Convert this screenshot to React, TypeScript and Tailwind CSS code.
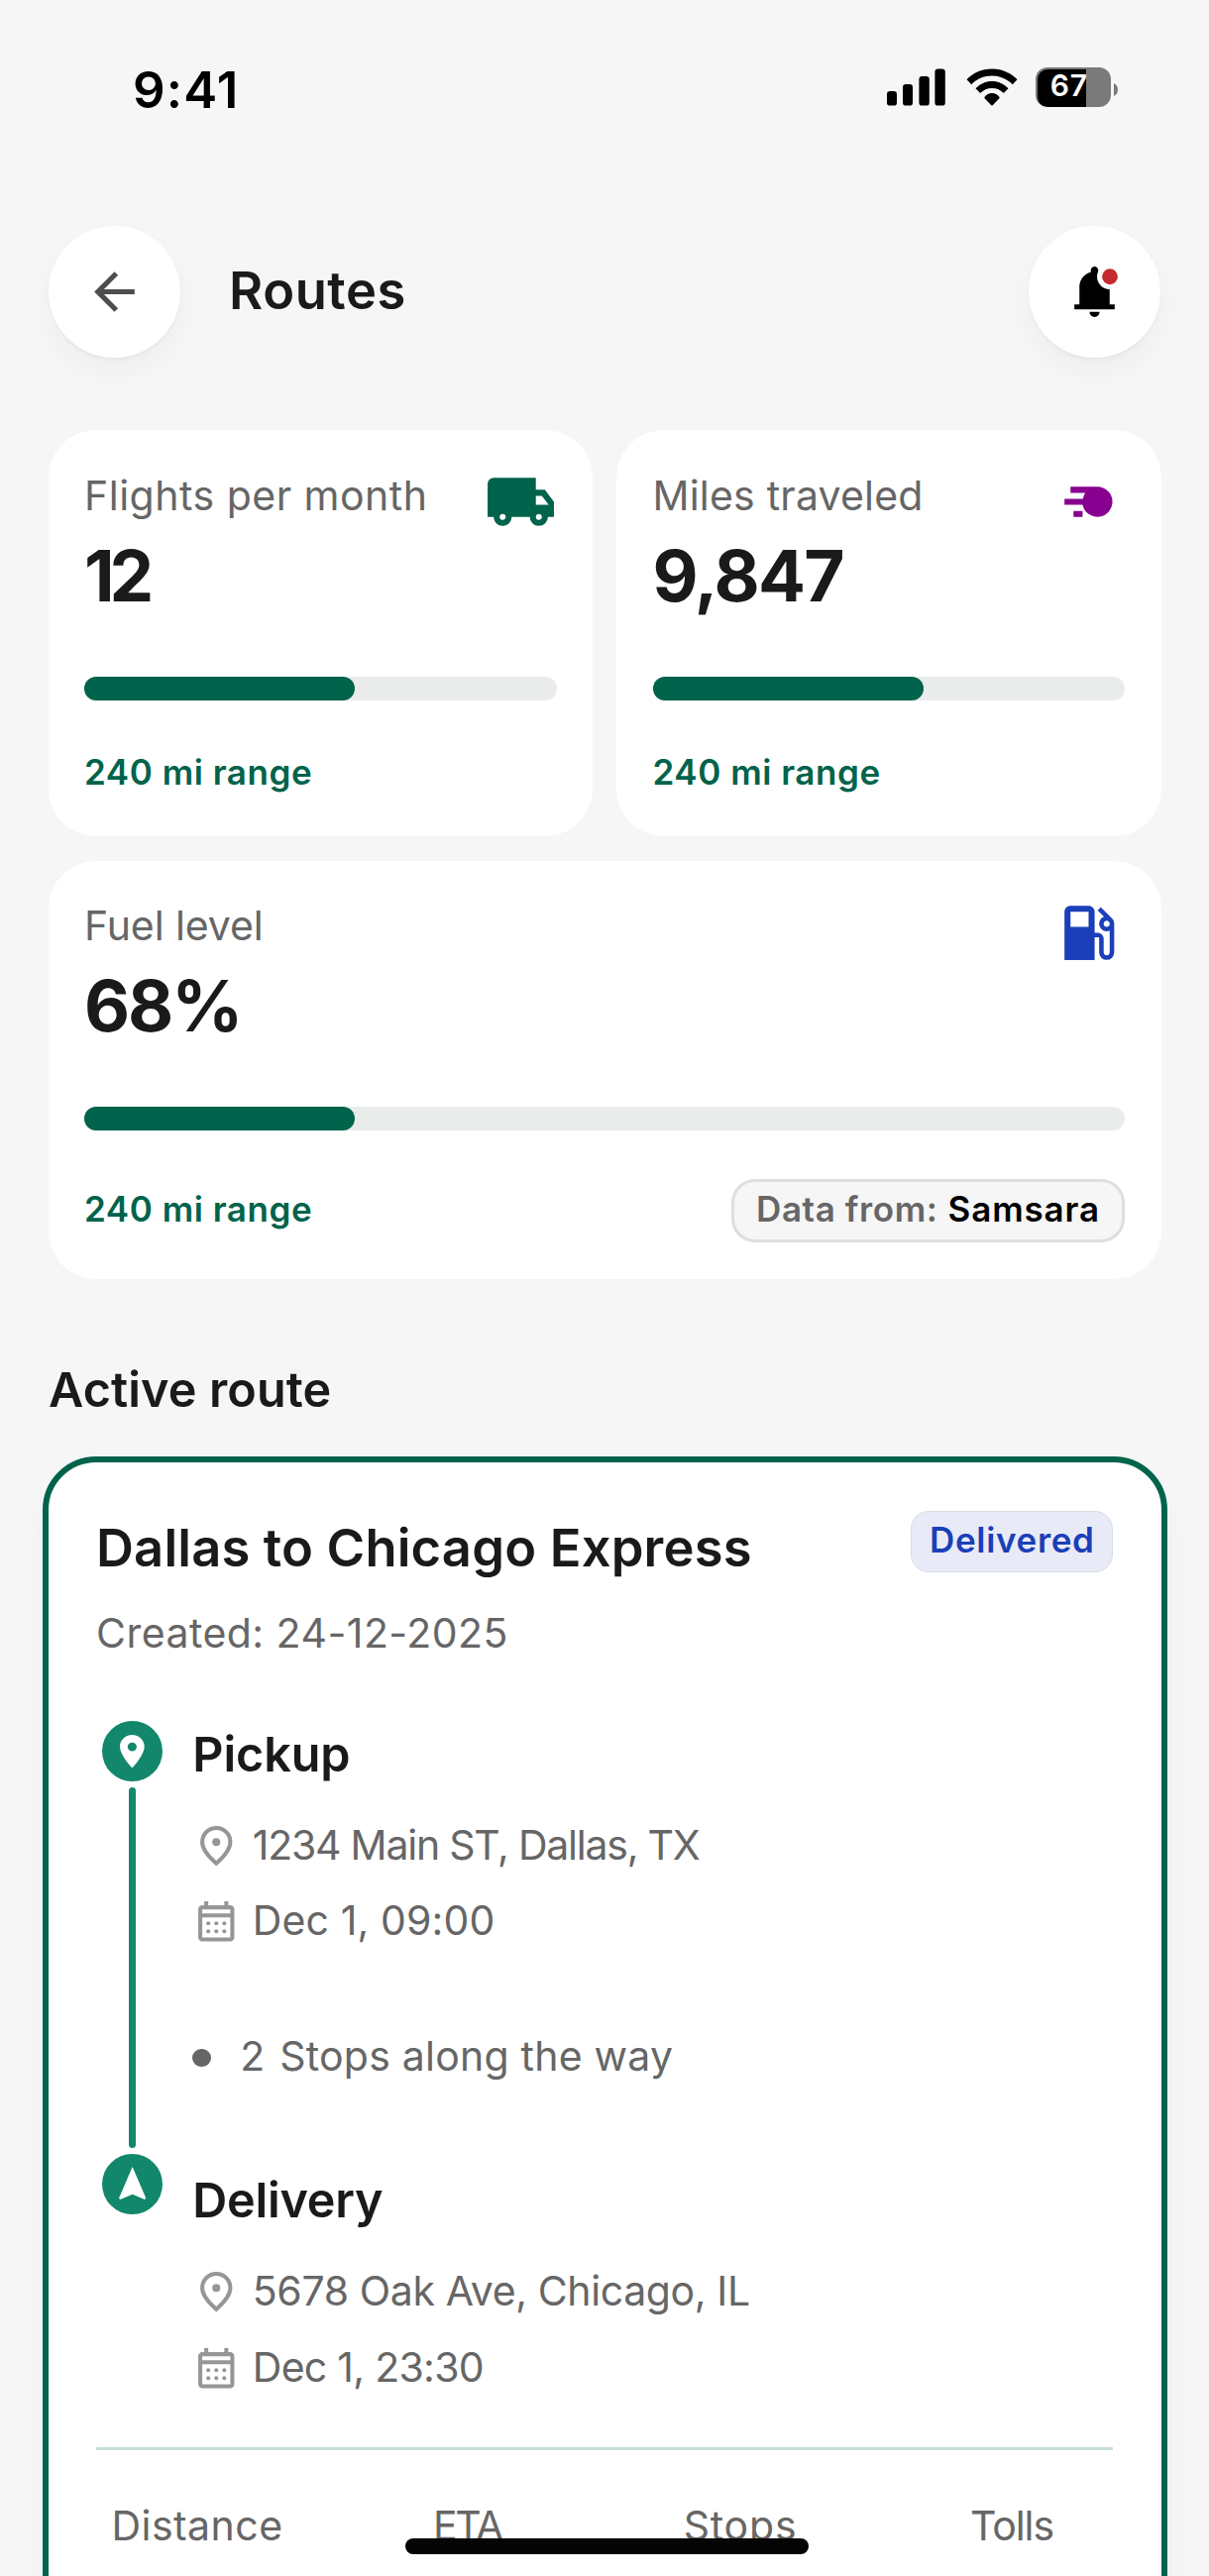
import React from "react";
import { MdArrowBack, MdLocalGasStation } from "react-icons/md";

interface StatCardProps {
  label: string;
  labelClass?: string;
  value: string;
  valueClass: string;
  progress: number;
  icon: React.ReactNode;
  className?: string;
  children: React.ReactNode;
}

interface StopProps {
  title: string;
  titleClass: string;
  address: string;
  addressClass: string;
  date: string;
  dateClass: string;
}

const TruckIcon = () => (
  <svg className="size-[73px] text-[#00634b]" viewBox="0 0 24 24" fill="currentColor">
    <path d="M6 20q-1.25 0-2.125-.875T3 17H1V6q0-.825.588-1.412T3 4h14v4h3l3 4v5h-2q0 1.25-.875 2.125T18 20t-2.125-.875T15 17H9q0 1.25-.875 2.125T6 20m0-2q.425 0 .713-.288T7 17t-.288-.712T6 16t-.712.288T5 17t.288.713T6 18m12 0q.425 0 .713-.288T19 17t-.288-.712T18 16t-.712.288T17 17t.288.713T18 18m-1-5h4.25L19 10h-2z" />
  </svg>
);

const MotionIcon = () => (
  <svg className="size-[73px] text-[#87008f]" viewBox="0 0 24 24" fill="currentColor">
    <path d="M6 7h9a5 5 0 1 1-5 6H4v-2h6.1q.15-1.1.8-2H6zM7 15h3v2H7z" />
  </svg>
);

const BellIcon = () => (
  <svg className="size-[61px]" viewBox="0 0 24 24">
    <path
      fill="#000"
      d="M4 19v-2h2v-7q0-2.075 1.25-3.687T10.5 4.2v-.7q0-.625.438-1.062T12 2t1.063.438T13.5 3.5v.7q2 .5 3.25 2.113T18 10v7h2v2zM10 20h4q0 .825-.587 1.413T12 22t-1.412-.587T10 20"
    />
    <circle cx="18" cy="6" r="5" fill="#fff" />
    <circle cx="18.1" cy="6" r="3.1" fill="#c4292f" />
  </svg>
);

const PinIcon = () => (
  <svg className="mt-[1.5px] size-[48.5px] shrink-0 text-[#969696]" viewBox="0 0 24 24" fill="currentColor">
    <path d="M12 19.35q3.05-2.8 4.525-5.087T18 10.2q0-2.725-1.737-4.462T12 4T7.738 5.738T6 10.2q0 1.775 1.475 4.063T12 19.35M12 22q-4.025-3.425-6.012-6.362T4 10.2q0-3.75 2.413-5.975T12 2t5.588 2.225T20 10.2q0 2.5-1.987 5.438T12 22" />
    <circle cx="12" cy="10" r="2" />
  </svg>
);

const CalendarIcon = () => (
  <svg className="mt-px size-[48.5px] shrink-0 text-[#969696]" viewBox="0 0 24 24" fill="currentColor">
    <path d="M5 22q-.825 0-1.412-.587T3 20V6q0-.825.588-1.412T5 4h1V2h2v2h8V2h2v2h1q.825 0 1.413.588T21 6v14q0 .825-.587 1.413T19 22zm0-2h14V10H5zM5 8h14V6H5z" />
    {[8, 12, 16].map((x) => (
      <React.Fragment key={x}>
        <circle cx={x} cy="13" r="1" />
        <circle cx={x} cy="17" r="1" />
      </React.Fragment>
    ))}
  </svg>
);

const StatusBar = () => (
  <div className="flex h-[228px] items-start justify-between pt-[61px] pr-[92px] pl-[134px]">
    <span className="text-[51px] leading-[60px] font-semibold tracking-[1.2px] text-black">9:41</span>
    <div className="flex items-start pt-[7px]">
      {/* Signal */}
      <svg className="h-[39px] w-[59px]" viewBox="0 0 59 39">
        <rect x="0" y="24" width="10" height="14.6" rx="3.2" />
        <rect x="16" y="17" width="10" height="21.6" rx="3.2" />
        <rect x="32.4" y="9" width="10.4" height="29.6" rx="3.2" />
        <rect x="48.4" y="1.6" width="10.4" height="37" rx="3.2" />
      </svg>
      {/* Wifi */}
      <svg className="ml-[20.5px] h-[39px] w-[52px]" viewBox="0 0 52 39">
        <path d="M26 1.6C36 1.6 44.9 5.6 51.5 12.3L46.8 17.2C41.3 11.9 34.2 8.6 26 8.6S10.7 11.9 5.2 17.2L.5 12.3C7.1 5.6 16 1.6 26 1.6Z" />
        <path d="M26 13.9C32.3 13.9 38.2 16.6 42.5 21.2L37.8 26.1C34.7 22.9 30.6 21 26 21S17.3 22.9 14.2 26.1L9.5 21.2C13.8 16.6 19.7 13.9 26 13.9Z" />
        <path d="M26 26.1C29 26.1 31.6 27.6 33.5 30.1Q34 30.7 33.4 31.3L26.7 38.2Q26 38.9 25.3 38.2L18.6 31.3Q18 30.7 18.5 30.1C20.4 27.6 23 26.1 26 26.1Z" />
      </svg>
      {/* Battery */}
      <div className="ml-[18.5px] flex items-center">
        <div className="relative h-[40px] w-[76px] overflow-hidden rounded-[12px] bg-[#7a7a7a]">
          <div className="absolute top-[1.5px] bottom-0 left-[2px] w-[49px] rounded-l-[10px] bg-black" />
          <span className="absolute top-[-1px] left-[14.7px] text-[30px] leading-[38px] font-semibold tracking-[0.8px] text-white">
            67
          </span>
        </div>
        <svg className="mt-[4px] ml-[3px] h-[13px] w-[4px]" viewBox="0 0 4 13">
          <path d="M0 0q4 2 4 6.5t-4 6.5z" fill="#7a7a7a" />
        </svg>
      </div>
    </div>
  </div>
);

const RoundButton = ({ children }: { children: React.ReactNode }) => (
  <button className="flex size-[133px] items-center justify-center rounded-full bg-white shadow-[0_3px_3px_rgba(0,40,30,0.03),0_12px_24px_rgba(0,40,30,0.04)]">
    {children}
  </button>
);

const StatCard: React.FC<StatCardProps> = ({
  label,
  labelClass = "",
  value,
  valueClass,
  progress,
  icon,
  className = "",
  children,
}) => (
  <div className={`rounded-[48px] bg-white px-[36.5px] pt-[36px] ${className}`}>
    <div className="flex items-start justify-between">
      <div className="pt-[5.6px]">
        <div className={`text-[41px] leading-[48px] whitespace-nowrap text-[#666] ${labelClass}`}>{label}</div>
        <div className={`mt-[17px] text-[71px] leading-[80px] font-bold text-[#1a1a1a] ${valueClass}`}>{value}</div>
      </div>
      {icon}
    </div>
    <div className="mt-[62.4px] h-[24px] rounded-full bg-[#eaeceb]">
      <div className="h-full rounded-full bg-[#00634b]" style={{ width: `${progress}px` }} />
    </div>
    {children}
  </div>
);

const Range = () => (
  <span className="text-[35px] leading-[44px] font-semibold tracking-[0.54px] text-[#00634b]">240 mi range</span>
);

const Stop: React.FC<StopProps> = ({ title, titleClass, address, addressClass, date, dateClass }) => (
  <div>
    <h3 className={`text-[48.5px] leading-[56px] font-semibold text-[#1a1a1a] ${titleClass}`}>{title}</h3>
    <div className="mt-[39px] flex h-[48px] items-start gap-[12px] text-[41px] leading-[48px] text-[#666]">
      <PinIcon />
      <span className={`whitespace-nowrap ${addressClass}`}>{address}</span>
    </div>
    <div className="mt-[28.6px] flex h-[48px] items-start gap-[12px] text-[41px] leading-[48px] text-[#666]">
      <CalendarIcon />
      <span className={`whitespace-nowrap ${dateClass}`}>{date}</span>
    </div>
  </div>
);

const Timeline = () => (
  <div className="flex w-[61px] flex-col items-center gap-[6px]">
    <div className="flex size-[61px] items-center justify-center rounded-full bg-[#12876c]">
      <svg className="h-[33.5px] w-[24.7px]" viewBox="5 2 14 20" preserveAspectRatio="none" fill="#fff">
        <path d="M12 2C8.13 2 5 5.13 5 9c0 5.25 7 13 7 13s7-7.75 7-13c0-3.87-3.13-7-7-7m0 9.8a2.6 2.6 0 1 1 0-5.2 2.6 2.6 0 0 1 0 5.2" />
      </svg>
    </div>
    <div className="h-[364px] w-[6.5px] rounded-full bg-[#12876c]" />
    <div className="flex size-[61px] items-center justify-center rounded-full bg-[#12876c] pb-[2px]">
      <svg className="h-[33px] w-[27.3px]" viewBox="4.5 2 15 19" preserveAspectRatio="none" fill="#fff">
        <path d="M12 2L4.5 20.29l.71.71L12 18l6.79 3 .71-.71z" />
      </svg>
    </div>
  </div>
);

export default function App() {
  return (
    <div className="relative h-[2600px] w-[1220px] overflow-hidden bg-[#f6f6f6] font-[Inter,sans-serif]">
      <StatusBar />

      {/* Header */}
      <header className="flex items-center px-[49px]">
        <RoundButton>
          <MdArrowBack className="size-[61px] text-[#4d4d4d]" />
        </RoundButton>
        <h1 className="ml-[49px] pb-[3px] text-[52.5px] leading-[62px] font-semibold tracking-[0.55px] text-[#1a1a1a]">
          Routes
        </h1>
        <div className="ml-auto">
          <RoundButton>
            <BellIcon />
          </RoundButton>
        </div>
      </header>

      {/* Stats */}
      <section className="mt-[73px] grid grid-cols-2 gap-x-[24px] gap-y-[24.5px] px-[48.5px]">
        <StatCard
          label="Flights per month"
          labelClass="tracking-[0.5px]"
          value="12"
          valueClass="tracking-[-5px]"
          progress={273}
          icon={<TruckIcon />}
          className="h-[410px]"
        >
          <div className="mt-[50px] flex">
            <Range />
          </div>
        </StatCard>
        <StatCard
          label="Miles traveled"
          labelClass="tracking-[0.2px]"
          value="9,847"
          valueClass="tracking-[-1.81px]"
          progress={273}
          icon={<MotionIcon />}
          className="h-[410px]"
        >
          <div className="mt-[50px] flex">
            <Range />
          </div>
        </StatCard>
        <StatCard
          label="Fuel level"
          labelClass="tracking-[-0.1px]"
          value="68%"
          valueClass="tracking-[-2.06px]"
          progress={273}
          icon={<MdLocalGasStation className="size-[73px] text-[#1b3fb8]" />}
          className="col-span-2 h-[422.5px]"
        >
          <div className="mt-[48.8px] flex items-start justify-between">
            <div className="flex pt-[7.5px]">
              <Range />
            </div>
            <div className="flex h-[64px] w-[397px] items-start rounded-[24px] border-3 border-[#dcdfde] bg-[#f6f6f6] pt-[4.5px] pl-[22px] text-[35px] leading-[44px] font-semibold whitespace-nowrap">
              <span className="tracking-[0.6px] text-[#666]">Data from:</span>
              <span className="ml-[10px] tracking-[0.87px] text-black">Samsara</span>
            </div>
          </div>
        </StatCard>
      </section>

      {/* Active route */}
      <h2 className="mt-[84px] pl-[49px] text-[48.5px] leading-[56px] font-semibold tracking-[0.12px] text-[#1a1a1a]">
        Active route
      </h2>
      <section className="mx-[42.5px] mt-[39px] h-[1300px] rounded-[54px] border-6 border-[#00634b] bg-white px-[48.5px] pt-[49px] shadow-[0_24px_24px_rgba(0,40,30,0.04)]">
        <div className="flex items-start justify-between">
          <h3 className="mt-[6.3px] text-[52.5px] leading-[62px] font-semibold tracking-[0.16px] whitespace-nowrap text-[#1a1a1a]">
            Dallas to Chicago Express
          </h3>
          <span className="h-[61.5px] w-[204px] rounded-[18px] border-[1.5px] border-[#d9dcdf] bg-[#e8ebf7] pt-[6px] pl-[18px] text-[35px] leading-[44px] font-semibold tracking-[0.67px] text-[#1b3fb8]">
            Delivered
          </span>
        </div>
        <p className="mt-[31.2px] text-[41px] leading-[48px] tracking-[0.47px] text-[#666]">
          Created: 24-12-2025
        </p>

        <div className="mt-[64.7px] flex gap-[30.3px] pl-[6px]">
          <Timeline />
          <div className="pt-[5.7px]">
            <Stop
              title="Pickup"
              titleClass="tracking-[-0.11px]"
              address="1234 Main ST, Dallas, TX"
              addressClass="tracking-[-1.24px]"
              date="Dec 1, 09:00"
              dateClass="tracking-[0.11px]"
            />
            <div className="mt-[88.7px] mb-[93.8px] flex text-[41px] leading-[48px] text-[#666]">
              <span className="mt-[16.5px] size-[18.5px] rounded-full bg-[#666]" />
              <span className="ml-[29.5px]">2</span>
              <span className="ml-[15px] tracking-[0.22px]">Stops along the way</span>
            </div>
            <Stop
              title="Delivery"
              titleClass="tracking-[-0.24px]"
              address="5678 Oak Ave, Chicago, IL"
              addressClass="tracking-[-0.38px]"
              date="Dec 1, 23:30"
              dateClass="tracking-[-0.72px]"
            />
          </div>
        </div>

        {/* Totals */}
        <div className="mt-[57.4px] grid grid-cols-4 gap-[70px] border-t-3 border-[#c8ddda] pt-[51.8px] text-center text-[41px] leading-[48px] text-[#666]">
          <span className="tracking-[0.47px]">Distance</span>
          <span className="pr-[3px] tracking-[-2.31px]">ETA</span>
          <span className="tracking-[0.82px]">Stops</span>
          <span className="tracking-[-1.05px]">Tolls</span>
        </div>
      </section>

      {/* Home indicator */}
      <div className="absolute top-[2562px] left-[409px] h-[15.5px] w-[406.5px] rounded-full bg-[#050505]" />
    </div>
  );
}
